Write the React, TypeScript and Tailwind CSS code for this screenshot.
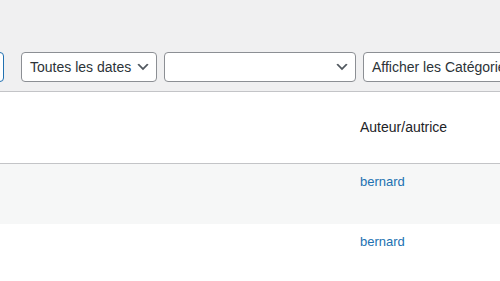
function Chevron() {
  return (
    <svg width="16" height="16" viewBox="0 0 20 20" className="shrink-0">
      <path d="M5 6l5 5 5-5 2 1-7 7-7-7z" fill="#50575e" />
    </svg>
  );
}

function Select({ label, width }: { label: string; width: string }) {
  return (
    <div
      className={`${width} h-[30px] shrink-0 flex items-center justify-between pl-2 pr-[5px] bg-white border border-[#8c8f94] rounded-[4px] text-[14px] text-[#2c3338] leading-none`}
    >
      <span className="whitespace-nowrap">{label}</span>
      {label !== 'Afficher les Catégories' && <Chevron />}
    </div>
  );
}

export default function App() {
  return (
    <div className="w-[500px] h-[281px] overflow-hidden bg-white font-['Liberation_Sans',Arial,sans-serif]">
      <div className="h-[92px] bg-[#f0f0f1] border-b border-[#c3c4c7] pt-[52px]">
        <div className="flex items-start gap-[7px] -ml-[36px]">
          <div className="w-[40px] h-[30px] shrink-0 bg-white border border-[#2271b1] rounded-[4px] mr-[10px]" />
          <Select label="Toutes les dates" width="w-[136px]" />
          <Select label="" width="w-[192px]" />
          <Select label="Afficher les Catégories" width="w-[180px]" />
        </div>
      </div>
      <div className="h-[72px] border-b border-[#c3c4c7] flex items-center pl-[360px] text-[14px] text-[#1d2327]">
        Auteur/autrice
      </div>
      <div className="h-[60px] bg-[#f6f7f7] pl-[360px] pt-[8px] text-[13px] text-[#2271b1]">
        bernard
      </div>
      <div className="h-[60px] bg-white pl-[360px] pt-[8px] text-[13px] text-[#2271b1]">
        bernard
      </div>
    </div>
  );
}
